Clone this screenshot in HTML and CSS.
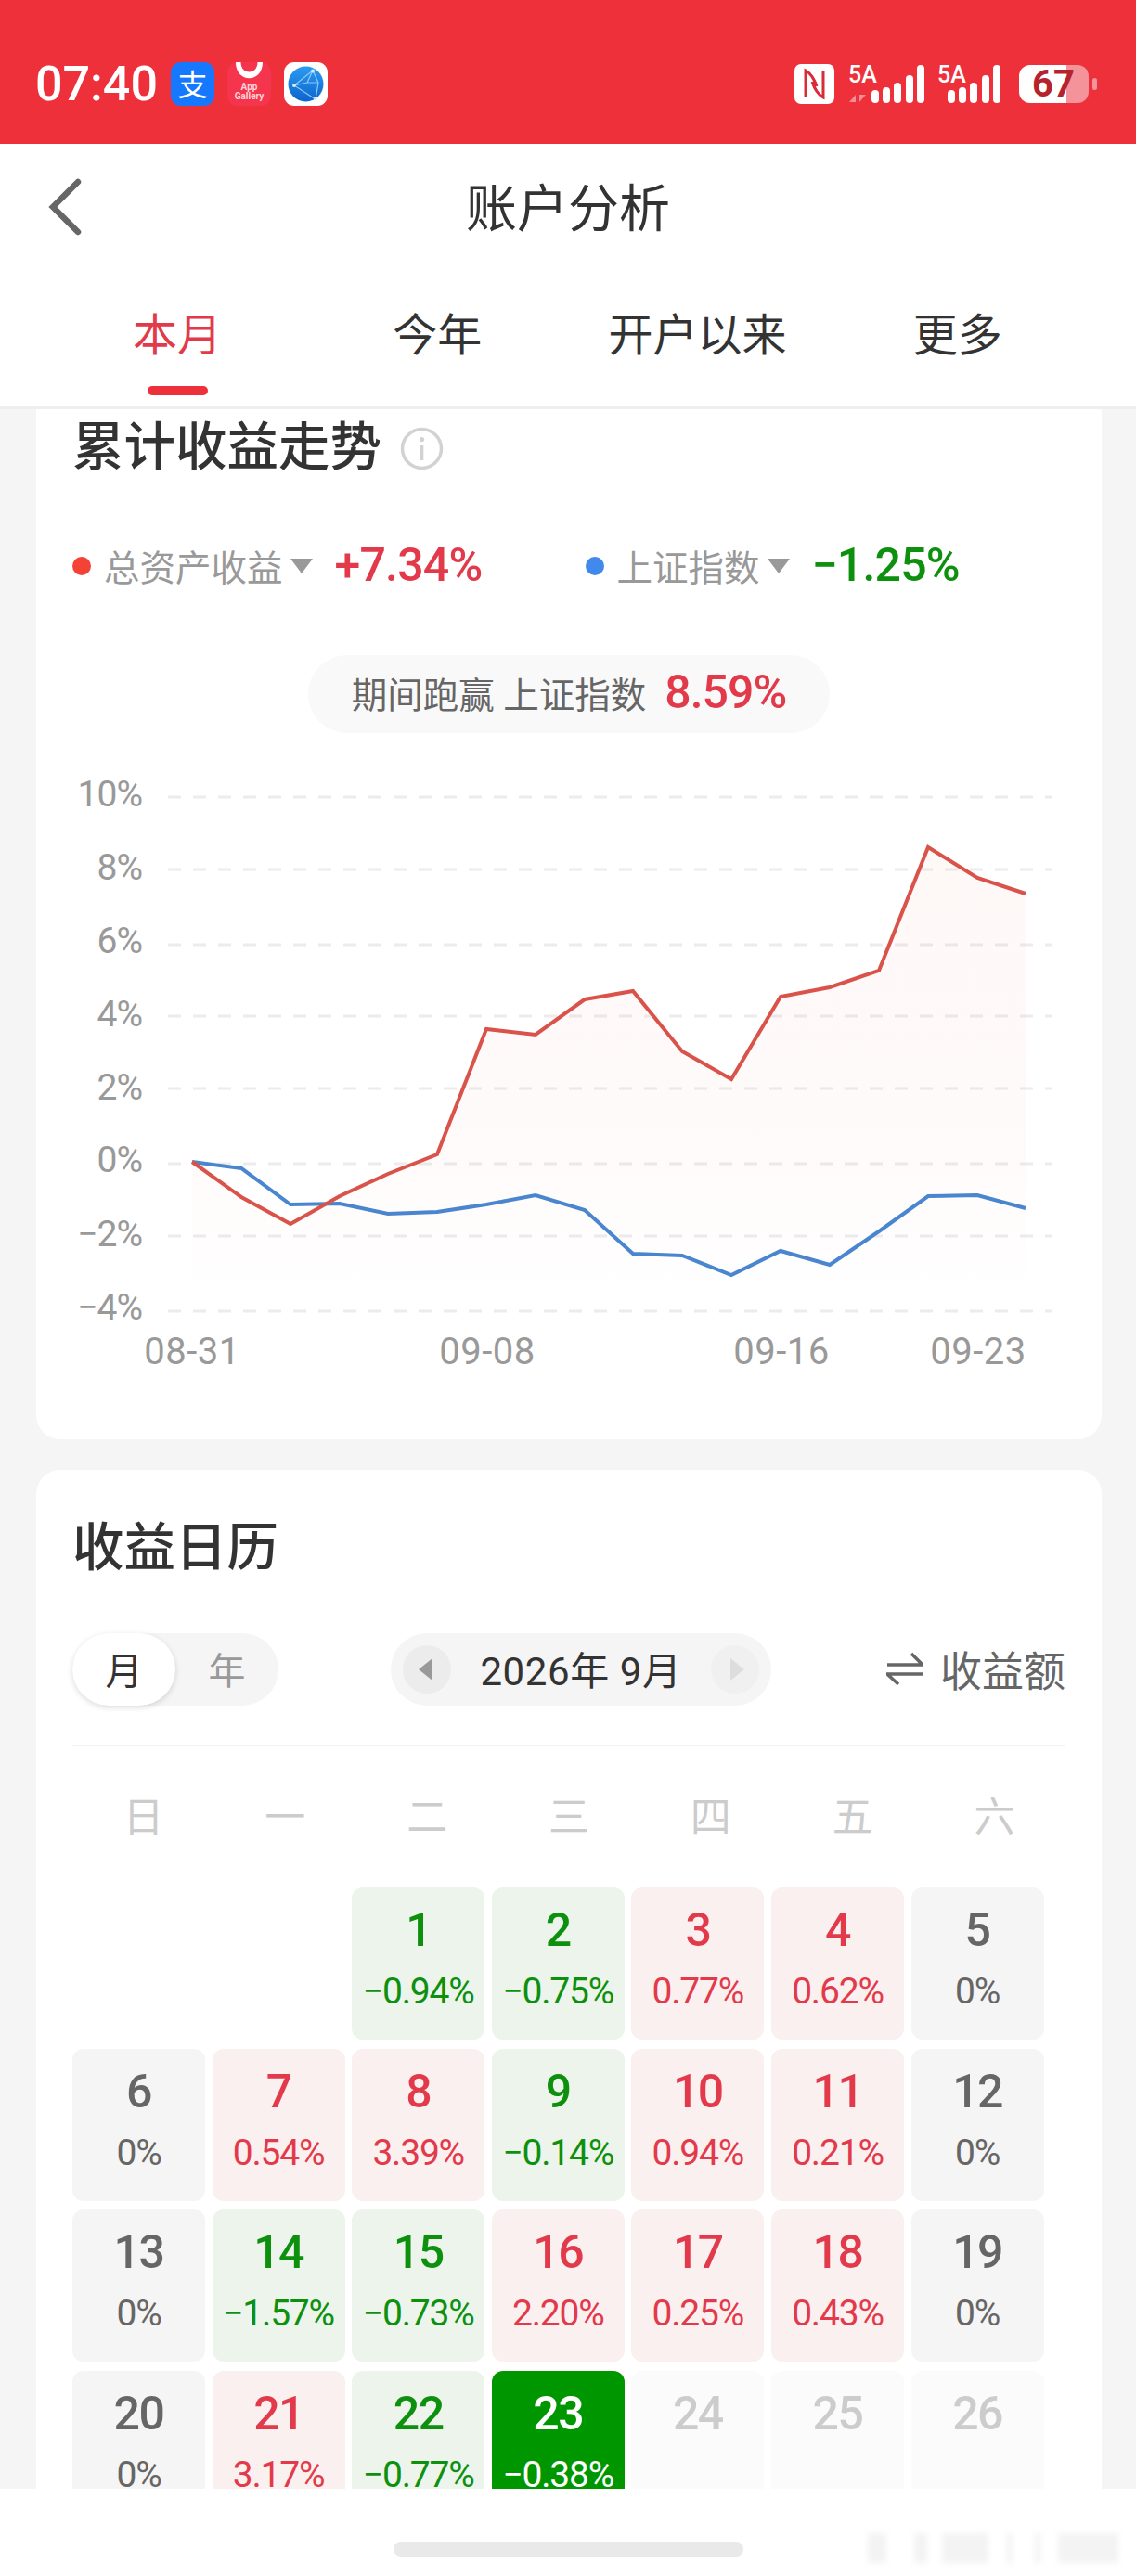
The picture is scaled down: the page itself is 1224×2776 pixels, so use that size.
FILE: index.html
```html
<!DOCTYPE html>
<html lang="zh-CN">
<head>
    <meta charset="UTF-8">
    <meta name="viewport" content="width=device-width, initial-scale=1.0">
    <title>账户分析</title>
    <link rel="stylesheet" href="styles.css">
</head>
<body>
    <div class="status-bar">
        <div class="status-left">
            <span class="time">07:40</span>
            <svg class="app-icon" viewBox="0 0 47 47">
                <rect width="47" height="47" rx="11" fill="#1677ff"/>
                <text class="alipay-mark" x="23.5" y="36">支</text>
            </svg>
            <svg class="app-icon gallery-icon" viewBox="0 0 47 47">
                <rect width="47" height="47" rx="11" fill="#f5354e"/>
                <path d="M9 0c0 23 29 23 29 0h-5.5c0 14-18 14-18 0z" fill="#fff"/>
                <text class="gallery-text" x="23.5" y="30">App</text>
                <text class="gallery-text" x="23.5" y="40">Gallery</text>
            </svg>
            <svg class="app-icon globe-icon" viewBox="0 0 47 47">
                <defs>
                    <linearGradient id="globeFill" x1="0" y1="0" x2="0" y2="1">
                        <stop offset="0" stop-color="#2a9cf2"/>
                        <stop offset="1" stop-color="#0d63cc"/>
                    </linearGradient>
                </defs>
                <rect width="47" height="47" rx="11" fill="#fff"/>
                <circle cx="23.5" cy="23.5" r="19" fill="url(#globeFill)"/>
                <path d="M31 9 11 25l23 15M31 9l6 13-3 18M31 9 25 22l12 0M11 25l14-3" fill="none" stroke="#8cc8f8" stroke-width="1.2"/>
                <circle cx="31" cy="9.5" r="2" fill="#cfe9ff"/>
                <circle cx="11" cy="25" r="2" fill="#cfe9ff"/>
                <circle cx="34" cy="39" r="2" fill="#cfe9ff"/>
            </svg>
        </div>
        <div class="status-right">
            <svg class="nfc-icon" viewBox="0 0 43 43">
                <rect width="43" height="43" rx="7" fill="#fff"/>
                <path d="M12 36V7c7 4 10 11 12 17M31 7v29c-7-4-10-11-12-17" fill="none" stroke="#d92b38" stroke-width="3"/>
            </svg>
            <svg class="signal-icon" viewBox="0 0 86 44">
                <text class="signal-text" x="2" y="21">5A</text>
                <path d="M10 34v8H3zM14 42v-8h7z" fill="#f58e95"/>
                <rect x="27" y="29" width="8" height="14" rx="4" fill="#fff"/>
                <rect x="39" y="26" width="8" height="17" rx="4" fill="#fff"/>
                <rect x="51" y="21" width="8" height="22" rx="4" fill="#fff"/>
                <rect x="64" y="13" width="8" height="30" rx="4" fill="#fff"/>
                <rect x="76" y="2" width="8" height="41" rx="4" fill="#fff"/>
            </svg>
            <svg class="signal-icon second" viewBox="0 0 70 44">
                <text class="signal-text" x="0" y="21">5A</text>
                <rect x="11" y="29" width="8" height="14" rx="4" fill="#fff"/>
                <rect x="23" y="26" width="8" height="17" rx="4" fill="#fff"/>
                <rect x="35" y="21" width="8" height="22" rx="4" fill="#fff"/>
                <rect x="48" y="13" width="8" height="30" rx="4" fill="#fff"/>
                <rect x="60" y="2" width="8" height="41" rx="4" fill="#fff"/>
            </svg>
            <div class="battery">
                <div class="battery-body"><span>67</span></div>
                <div class="battery-nub"></div>
            </div>
        </div>
    </div>

    <div class="nav-bar">
        <svg class="back-icon" viewBox="0 0 38 62">
            <path d="M33 4 6 31l27 27" fill="none" stroke="#666" stroke-width="6.5" stroke-linecap="round"/>
        </svg>
        <h1>账户分析</h1>
    </div>

    <div class="tabs">
        <div class="tab active"><span>本月</span><i class="tab-line"></i></div>
        <div class="tab"><span>今年</span></div>
        <div class="tab"><span>开户以来</span></div>
        <div class="tab"><span>更多</span></div>
    </div>

    <div class="content">
        <section class="card trend-card">
            <div class="card-title">
                <h2>累计收益走势</h2>
                <svg class="info-icon" viewBox="0 0 47 47">
                    <circle cx="23.5" cy="23.5" r="21" fill="none" stroke="#d2d2d2" stroke-width="3.5"/>
                    <circle cx="23.5" cy="13.5" r="2.6" fill="#d2d2d2"/>
                    <rect x="21.7" y="20" width="3.6" height="16" fill="#d2d2d2"/>
                </svg>
            </div>

            <div class="legend">
                <div class="legend-item">
                    <i class="dot dot-red"></i>
                    <span class="legend-name">总资产收益</span>
                    <i class="caret"></i>
                    <span class="legend-value up">+7.34%</span>
                </div>
                <div class="legend-item">
                    <i class="dot dot-blue"></i>
                    <span class="legend-name">上证指数</span>
                    <i class="caret"></i>
                    <span class="legend-value down">−1.25%</span>
                </div>
            </div>

            <div class="beat-pill">
                <span>期间跑赢 上证指数</span>
                <span class="beat-value up">8.59%</span>
            </div>

            <!-- viewBox uses page coordinates so points can be read straight off the screenshot -->
            <svg class="trend-chart" viewBox="39 790 1148 761">
                <defs>
                    <linearGradient id="areaFade" gradientUnits="userSpaceOnUse" x1="0" y1="913" x2="0" y2="1400">
                        <stop offset="0" stop-color="#f2503c" stop-opacity="0.04"/>
                        <stop offset="0.7" stop-color="#f2503c" stop-opacity="0.025"/>
                        <stop offset="1" stop-color="#f2503c" stop-opacity="0"/>
                    </linearGradient>
                </defs>
                <g class="grid-lines">
                    <line x1="181" y1="859" x2="1134" y2="859"/>
                    <line x1="181" y1="937" x2="1134" y2="937"/>
                    <line x1="181" y1="1018" x2="1134" y2="1018"/>
                    <line x1="181" y1="1095" x2="1134" y2="1095"/>
                    <line x1="181" y1="1173" x2="1134" y2="1173"/>
                    <line x1="181" y1="1254" x2="1134" y2="1254"/>
                    <line x1="181" y1="1332" x2="1134" y2="1332"/>
                    <line x1="181" y1="1413" x2="1134" y2="1413"/>
                </g>
                <g class="y-labels">
                    <text x="153" y="869">10%</text>
                    <text x="153" y="948">8%</text>
                    <text x="153" y="1027">6%</text>
                    <text x="153" y="1106">4%</text>
                    <text x="153" y="1185">2%</text>
                    <text x="153" y="1263">0%</text>
                    <text x="153" y="1343">−2%</text>
                    <text x="153" y="1422">−4%</text>
                </g>
                <polygon fill="url(#areaFade)" points="207,1252 260,1290 313,1319 366,1289 418,1265 471,1244 524,1109 577,1115 630,1077 682,1068 735,1133 788,1163 841,1074 894,1064 947,1046 1000,913 1053,946 1105,963 1105,1413 207,1413"/>
                <polyline class="line-blue" points="207,1252 260,1259 313,1298 366,1297 418,1308 471,1306 524,1298 577,1288 630,1304 682,1351 735,1353 788,1374 841,1348 894,1363 947,1327 1000,1289 1053,1288 1105,1302"/>
                <polyline class="line-red" points="207,1252 260,1290 313,1319 366,1289 418,1265 471,1244 524,1109 577,1115 630,1077 682,1068 735,1133 788,1163 841,1074 894,1064 947,1046 1000,913 1053,946 1105,963"/>
                <g class="x-labels">
                    <text x="207" y="1470">08-31</text>
                    <text x="525" y="1470">09-08</text>
                    <text x="842" y="1470">09-16</text>
                    <text x="1054" y="1470">09-23</text>
                </g>
            </svg>
        </section>

        <section class="card calendar-card">
            <h2>收益日历</h2>

            <div class="calendar-controls">
                <div class="view-toggle">
                    <span class="toggle-on">月</span>
                    <span class="toggle-off">年</span>
                </div>
                <div class="month-picker">
                    <span class="month-btn"><i class="arrow-left"></i></span>
                    <span class="month-label">2026年 9月</span>
                    <span class="month-btn disabled"><i class="arrow-right"></i></span>
                </div>
                <div class="metric-switch">
                    <svg class="swap-icon" viewBox="0 0 40 36">
                        <path d="M1 14h38L27 2" fill="none" stroke="#666" stroke-width="3.5"/>
                        <path d="M39 24H1l12 11" fill="none" stroke="#666" stroke-width="3.5"/>
                    </svg>
                    <span>收益额</span>
                </div>
            </div>

            <div class="weekdays">
                <span>日</span><span>一</span><span>二</span><span>三</span><span>四</span><span>五</span><span>六</span>
            </div>

            <div class="calendar-grid">
                <div class="day blank"></div>
                <div class="day blank"></div>
                <div class="day loss"><b>1</b><span>−0.94%</span></div>
                <div class="day loss"><b>2</b><span>−0.75%</span></div>
                <div class="day gain"><b>3</b><span>0.77%</span></div>
                <div class="day gain"><b>4</b><span>0.62%</span></div>
                <div class="day flat"><b>5</b><span>0%</span></div>

                <div class="day flat"><b>6</b><span>0%</span></div>
                <div class="day gain"><b>7</b><span>0.54%</span></div>
                <div class="day gain"><b>8</b><span>3.39%</span></div>
                <div class="day loss"><b>9</b><span>−0.14%</span></div>
                <div class="day gain"><b>10</b><span>0.94%</span></div>
                <div class="day gain"><b>11</b><span>0.21%</span></div>
                <div class="day flat"><b>12</b><span>0%</span></div>

                <div class="day flat"><b>13</b><span>0%</span></div>
                <div class="day loss"><b>14</b><span>−1.57%</span></div>
                <div class="day loss"><b>15</b><span>−0.73%</span></div>
                <div class="day gain"><b>16</b><span>2.20%</span></div>
                <div class="day gain"><b>17</b><span>0.25%</span></div>
                <div class="day gain"><b>18</b><span>0.43%</span></div>
                <div class="day flat"><b>19</b><span>0%</span></div>

                <div class="day flat"><b>20</b><span>0%</span></div>
                <div class="day gain"><b>21</b><span>3.17%</span></div>
                <div class="day loss"><b>22</b><span>−0.77%</span></div>
                <div class="day today"><b>23</b><span>−0.38%</span></div>
                <div class="day future"><b>24</b></div>
                <div class="day future"><b>25</b></div>
                <div class="day future"><b>26</b></div>
            </div>
        </section>
    </div>

    <div class="home-area">
        <div class="home-bar"></div>
        <!-- blurred watermark in the corner of the screenshot -->
        <div class="watermark">
            <i class="w1"></i><i class="w2"></i><i class="w3"></i><i class="w4"></i><i class="w5"></i><i class="w6"></i>
        </div>
    </div>
</body>
</html>
```

FILE: styles.css
```css
* {
    box-sizing: border-box;
}

body {
    margin: 0;
    width: 1224px;
    height: 2776px;
    display: flex;
    flex-direction: column;
    overflow: hidden;
    background-color: #f5f5f5;
    color: #333;
    font-family: Roboto, "Noto Sans CJK SC", sans-serif;
}

h1, h2 {
    margin: 0;
    font-weight: 500;
}

i {
    display: block;
}

/* Status bar */
.status-bar {
    height: 155px;
    flex-shrink: 0;
    padding: 25px 42px 0 38px;
    display: flex;
    align-items: center;
    justify-content: space-between;
    background-color: #ee303a;
}

.status-left {
    display: flex;
    align-items: center;
}

.time {
    width: 146px;
    color: white;
    font-size: 52px;
    font-weight: 500;
}

.app-icon {
    width: 47px;
    height: 47px;
    margin-right: 14px;
}

.alipay-mark {
    fill: white;
    font-size: 32px;
    text-anchor: middle;
}

.gallery-text {
    fill: #ffd5da;
    font-size: 10px;
    font-weight: 700;
    text-anchor: middle;
}

.status-right {
    display: flex;
    align-items: center;
}

.nfc-icon {
    width: 43px;
    height: 43px;
}

.signal-icon {
    width: 86px;
    height: 44px;
    margin-left: 13px;
    overflow: visible;
}

.signal-icon.second {
    width: 70px;
    margin-left: 12px;
}

.signal-text {
    fill: white;
    font-size: 25px;
    font-weight: 500;
}

.battery {
    display: flex;
    align-items: center;
    margin-left: 18px;
}

.battery-body {
    width: 75px;
    height: 41px;
    padding-left: 14px;
    border-radius: 12px;
    background: linear-gradient(to right, white 68%, #f4939a 68%);
    color: #b5232f;
    font-size: 40px;
    font-weight: 700;
    line-height: 41px;
}

.battery-nub {
    width: 5px;
    height: 13px;
    margin-left: 4px;
    border-radius: 3px;
    background-color: #f4939a;
}

/* Title bar */
.nav-bar {
    height: 136px;
    flex-shrink: 0;
    display: flex;
    align-items: center;
    justify-content: center;
    position: relative;
    padding-top: 3px;
    background: white;
}

.back-icon {
    position: absolute;
    left: 51px;
    top: 37px;
    width: 38px;
    height: 62px;
}

.nav-bar h1 {
    font-size: 55px;
    font-weight: 400;
    line-height: 64px;
}

/* Tabs */
.tabs {
    height: 150px;
    flex-shrink: 0;
    padding: 0 52px 0 51px;
    display: grid;
    grid-template-columns: repeat(4, 1fr);
    background: white;
    border-bottom: 3px solid #eee;
}

.tab {
    padding-top: 41px;
    display: flex;
    flex-direction: column;
    align-items: center;
    font-size: 48px;
    line-height: 60px;
}

.tab.active {
    color: #e33a4b;
}

.tab-line {
    width: 65px;
    height: 10px;
    margin-top: 24px;
    border-radius: 5px;
    background-color: #ee303a;
}

/* Cards */
.content {
    flex: 1;
    min-height: 0;
    overflow: hidden;
    padding-left: 39px;
}

.card {
    width: 1148px;
    padding: 0 39px;
    background: white;
    border-radius: 26px;
}

.up {
    color: #e33a4b;
}

.down {
    color: #0e900f;
}

.trend-card {
    padding-top: 10px;
    border-radius: 0 0 26px 26px;
}

.card-title {
    height: 62px;
    padding-top: 2px;
    display: flex;
    align-items: center;
}

.card h2 {
    font-size: 55.5px;
    line-height: 62px;
}

.info-icon {
    width: 47px;
    height: 47px;
    margin-left: 20px;
}

.legend {
    height: 60px;
    margin-top: 67px;
    padding-bottom: 3px;
    display: flex;
    gap: 108px;
}

.legend-item {
    display: flex;
    align-items: center;
}

.dot {
    width: 20px;
    height: 20px;
    margin: 3px 14px 0 0;
    border-radius: 50%;
}

.dot-red {
    background-color: #f44336;
}

.dot-blue {
    background-color: #4289ed;
}

.legend-name {
    color: #999;
    font-size: 38.5px;
}

.caret {
    width: 0;
    height: 0;
    margin: 3px 24px 0 8px;
    border-left: 12px solid transparent;
    border-right: 12px solid transparent;
    border-top: 16px solid #999;
}

.legend-value {
    width: 162px;
    font-size: 50px;
    font-weight: 500;
    letter-spacing: -0.8px;
}

.beat-pill {
    width: 562px;
    height: 84px;
    margin: 66px auto 0;
    padding-bottom: 4px;
    display: flex;
    align-items: center;
    justify-content: center;
    gap: 20px;
    border-radius: 42px;
    background-color: #f9f9f9;
    color: #666;
    font-size: 38.5px;
}

.beat-value {
    font-size: 50px;
    font-weight: 500;
    letter-spacing: -1px;
}

.trend-chart {
    display: block;
    width: 1148px;
    height: 761px;
    margin: 0 -39px;
}

.grid-lines line {
    stroke: #ececec;
    stroke-width: 3;
    stroke-dasharray: 14 13;
}

.y-labels text {
    fill: #999;
    font-size: 39px;
    letter-spacing: -1px;
    text-anchor: end;
}

.x-labels text {
    fill: #999;
    font-size: 40px;
    letter-spacing: 0.5px;
    text-anchor: middle;
}

.line-red, .line-blue {
    fill: none;
    stroke-width: 4;
    stroke-linejoin: miter;
}

.line-red {
    stroke: #d9534a;
}

.line-blue {
    stroke: #4a86cf;
}

/* Calendar */
.calendar-card {
    margin-top: 33px;
    padding-top: 54px;
}

.calendar-controls {
    height: 121px;
    margin-top: 61px;
    padding-bottom: 43px;
    display: flex;
    align-items: center;
    border-bottom: 2px solid #f2f2f2;
}

.view-toggle {
    width: 222px;
    height: 78px;
    display: flex;
    align-items: center;
    border-radius: 39px;
    background-color: #f5f5f5;
    font-size: 40px;
}

.toggle-on {
    width: 111px;
    height: 78px;
    padding-bottom: 3px;
    display: flex;
    align-items: center;
    justify-content: center;
    border-radius: 39px;
    background: white;
    box-shadow: 0 2px 6px rgba(0, 0, 0, 0.14);
}

.toggle-off {
    flex: 1;
    padding-bottom: 3px;
    text-align: center;
    color: #999;
}

.month-picker {
    width: 410px;
    height: 78px;
    margin-left: 121px;
    padding: 0 13px;
    display: flex;
    align-items: center;
    justify-content: space-between;
    border-radius: 39px;
    background-color: #f5f5f5;
}

.month-label {
    padding-bottom: 3px;
    font-size: 42px;
    letter-spacing: 0.6px;
}

.month-btn {
    width: 52px;
    height: 52px;
    display: flex;
    align-items: center;
    justify-content: center;
    border-radius: 50%;
    background-color: #ececec;
}

.month-btn.disabled {
    background-color: #f0f0f0;
}

.arrow-left {
    margin-right: 4px;
    border-top: 12px solid transparent;
    border-bottom: 12px solid transparent;
    border-right: 15px solid #999;
}

.arrow-right {
    margin-left: 4px;
    border-top: 12px solid transparent;
    border-bottom: 12px solid transparent;
    border-left: 15px solid #ddd;
}

.metric-switch {
    margin-left: auto;
    padding-bottom: 2px;
    display: flex;
    align-items: center;
    gap: 18px;
    color: #666;
    font-size: 45px;
}

.swap-icon {
    width: 40px;
    height: 36px;
}

.weekdays {
    height: 60px;
    margin-top: 47px;
    display: grid;
    grid-template-columns: repeat(7, 1fr);
    color: #ccc;
    font-size: 44px;
    line-height: 60px;
    text-align: center;
}

.calendar-grid {
    margin-top: 45px;
    display: grid;
    grid-template-columns: repeat(7, 143px);
    grid-auto-rows: 164px;
    gap: 9.5px 7.6px;
}

.day {
    padding-top: 18px;
    display: flex;
    flex-direction: column;
    align-items: center;
    border-radius: 12px;
    font-size: 39px;
    letter-spacing: -1.2px;
}

.day b {
    font-size: 50px;
    font-weight: 500;
    line-height: 56px;
    letter-spacing: -1.5px;
}

.day span {
    margin-top: 16px;
    line-height: 44px;
}

.day.blank {
    background: none;
}

.day.loss {
    background-color: #ecf4ec;
    color: #0e900f;
}

.day.gain {
    background-color: #faf0f0;
    color: #e33a4b;
}

.day.flat {
    background-color: #f5f5f5;
    color: #666;
}

.day.future {
    background-color: #fbfbfb;
    color: #ccc;
}

.day.today {
    background-color: #009600;
    color: white;
}

/* Bottom gesture area */
.home-area {
    height: 94px;
    flex-shrink: 0;
    position: relative;
    display: flex;
    justify-content: center;
    padding-top: 57px;
    background: white;
}

.home-bar {
    width: 377px;
    height: 16px;
    border-radius: 8px;
    background-color: #e9e9e9;
}

.watermark {
    position: absolute;
    left: 935px;
    top: 46px;
    width: 280px;
    height: 36px;
    filter: blur(3px);
}

.watermark i {
    position: absolute;
    top: 2px;
    height: 32px;
    background-color: #f3f3f3;
}

.w1 { left: 0; width: 20px; }
.w2 { left: 50px; width: 14px; }
.w3 { left: 80px; width: 50px; }
.w4 { left: 150px; width: 6px; }
.w5 { left: 180px; width: 6px; }
.w6 { left: 205px; width: 65px; }
```
